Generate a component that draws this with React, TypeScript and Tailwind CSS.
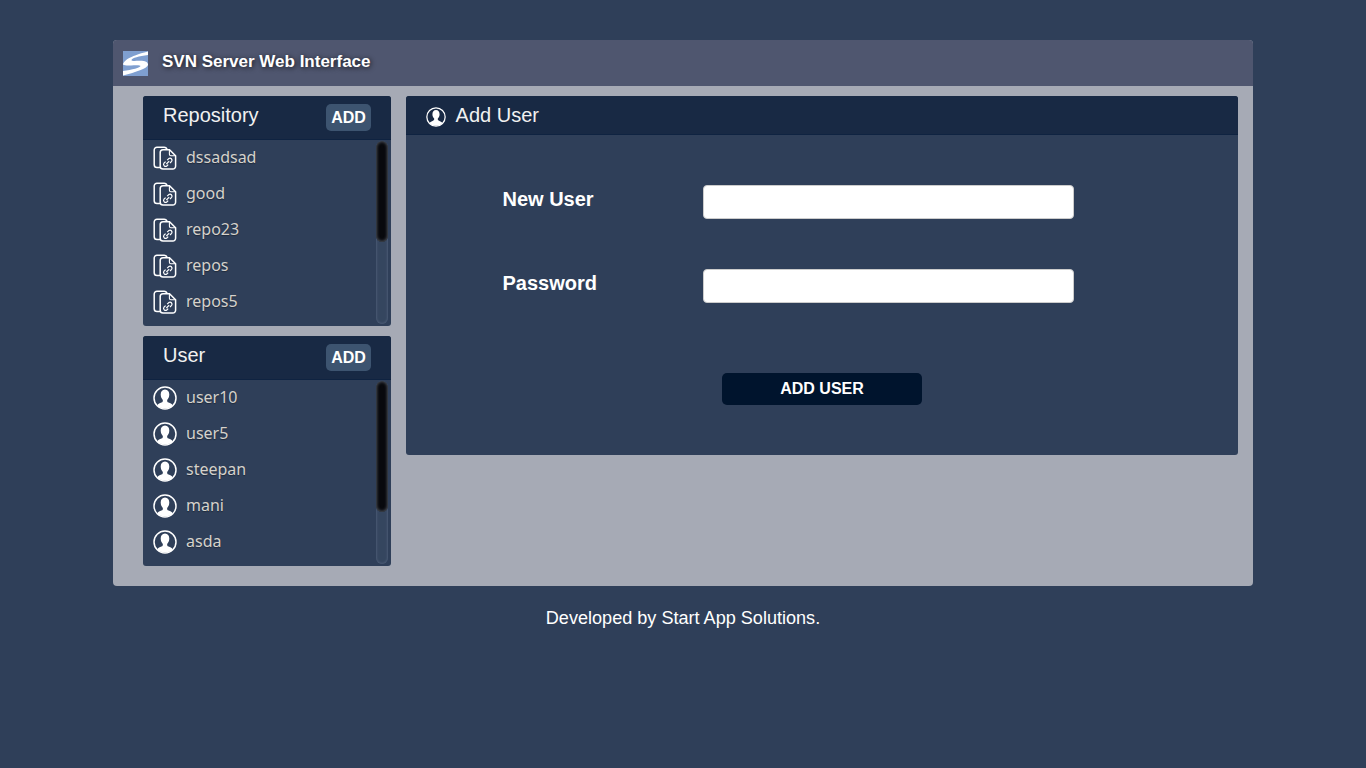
const sans = { fontFamily: '"Liberation Sans", Arial, sans-serif' };

function RepoIcon() {
  return (
    <svg width="24" height="24" viewBox="0 0 24 24" fill="none" stroke="#fff" strokeWidth="1.5" className="shrink-0">
      <path d="M7 21.5H4A2.8 2.8 0 0 1 1.2 18.7V4A2.8 2.8 0 0 1 4 1.2H11A3 3 0 0 1 14 3.5" />
      <path d="M10 3.8H16.5L22.6 9.8V20.2A2.8 2.8 0 0 1 19.8 23H10A2.8 2.8 0 0 1 7.2 20.2V6.6A2.8 2.8 0 0 1 10 3.8Z" fill="#2f3f5a" />
      <path d="M16.4 4V8.2A1.5 1.5 0 0 0 17.9 9.7H22.4" strokeWidth="1.1" />
      <path d="M14.2 14.2L15.8 12.6A2 2 0 0 1 18.6 15.4L17 17M15.2 18.6L13.8 20A2 2 0 0 1 11 17.2L12.6 15.6M13.4 18L16.2 15.2" strokeWidth="1.2" />
    </svg>
  );
}

function UserIcon({ size = 24 }: { size?: number }) {
  return (
    <svg width={size} height={size} viewBox="0 0 24 24" className="shrink-0">
      <circle cx="12" cy="12" r="11" fill="none" stroke="#fff" strokeWidth="1.5" />
      <path
        d="M12 3.6C9.2 3.6 7.7 5.8 7.7 8.6C7.7 11 8.7 12.8 9.8 13.9C10 15.2 9.8 16 8.4 16.6C6.8 17.3 5.2 17.8 4.2 19.4C6.2 21.4 9.1 22.4 12 22.4C14.9 22.4 17.8 21.4 19.8 19.4C18.8 17.8 17.2 17.3 15.6 16.6C14.2 16 14 15.2 14.2 13.9C15.3 12.8 16.3 11 16.3 8.6C16.3 5.8 14.8 3.6 12 3.6Z"
        fill="#fff"
      />
    </svg>
  );
}

function Logo() {
  return (
    <svg width="25" height="25" viewBox="0 0 25 25" className="shrink-0">
      <rect width="25" height="25" fill="#7f9fd0" />
      <path d="M0 13.5C1 10 5 5.5 25 0.5V4C16 5 9 7 8.5 9C8.3 10.3 12 10 16 9.8C22 9.6 25 11 25 13.5V14C24 17.5 13 21 0 24.5V20C9 19 17.5 16.5 17.5 15C17.5 14 13 14.2 8 14.4C4 14.6 1.5 14.4 0 13.5Z" fill="#fff" />
    </svg>
  );
}

function SidePanel({ title, items, icon, thumb }: { title: string; items: string[]; icon: React.ReactNode; thumb: "short" | "tall" }) {
  return (
    <section className="flex h-[230px] flex-col overflow-hidden rounded-[3px] bg-[#2f3f59]">
      <div className="flex h-[44px] shrink-0 items-start justify-between border-b border-[#0f2341] bg-[#182944] pl-5 pr-5">
        <h2 className="mt-[6px] text-[20px] leading-[27px] text-[#f1f1f1]">{title}</h2>
        <button className="mt-2 h-[27px] w-[45px] rounded-[5px] bg-[#3d5470] text-[16px] font-bold text-white">ADD</button>
      </div>
      <div className="flex min-h-0 flex-1">
        <ul className="flex-1 -translate-y-px">
          {items.map((item) => (
            <li key={item} className="flex h-[36px] items-center gap-[9px] pl-[10px]">
              <span className="translate-y-px">{icon}</span>
              <span className="text-[16px] leading-none text-[#d5d2cc]" style={{ fontFamily: '"Noto Sans", sans-serif', textShadow: "0 1px 1px rgba(0,0,0,.35)" }}>
                {item}
              </span>
            </li>
          ))}
        </ul>
        <div className="mr-[3px] mt-px h-[183px] w-3 overflow-hidden rounded-md bg-[#35465f] shadow-[inset_0_0_2px_1px_#4a5a74]">
          <div className={`rounded-md bg-[#08090d] shadow-[inset_0_0_3px_1px_rgba(90,95,105,.8)] ${thumb === "short" ? "h-[101px]" : "h-[131px]"}`} />
        </div>
      </div>
    </section>
  );
}

export default function App() {
  return (
    <div className="flex min-h-[768px] flex-col items-center bg-[#2f3f59] pt-10 text-white" style={sans}>
      <div className="w-[1140px] overflow-hidden rounded-[4px] bg-[#a6aab5]">
        <header className="flex h-[46px] items-center gap-[14px] bg-[#4f566f] pl-[10px]">
          <Logo />
          <h1 className="-translate-y-px text-[17px] font-bold" style={{ textShadow: "1px 1px 5px rgba(0,0,0,.75)" }}>
            SVN Server Web Interface
          </h1>
        </header>
        <div className="flex h-[500px] gap-[15px] pl-[30px] pr-[15px] pt-[10px]">
          <aside className="flex w-[248px] shrink-0 flex-col gap-[10px]">
            <SidePanel title="Repository" items={["dssadsad", "good", "repo23", "repos", "repos5"]} icon={<RepoIcon />} thumb="short" />
            <SidePanel title="User" items={["user10", "user5", "steepan", "mani", "asda"]} icon={<UserIcon />} thumb="tall" />
          </aside>
          <main className="h-[359px] flex-1 overflow-hidden rounded-[3px] bg-[#2f3f59]">
            <div className="flex h-[39px] items-center gap-[10px] border-b border-[#0f2341] bg-[#182944] pl-5">
              <span className="translate-y-[2px]">
                <UserIcon size={20} />
              </span>
              <h2 className="-ml-[0.4px] text-[20px] text-[#f1f1f1]">Add User</h2>
            </div>
            <form className="flex flex-col pt-[50px]">
              <div className="flex h-[34px] items-center pl-[96.5px]">
                <label className="w-[200.5px] pb-[6px] text-[20px] font-bold">New User</label>
                <input className="h-[34px] w-[371px] rounded-[4px] border border-[#ccc] bg-white" />
              </div>
              <div className="mt-[50px] flex h-[34px] items-center pl-[96.5px]">
                <label className="w-[200.5px] pb-[6px] text-[20px] font-bold">Password</label>
                <input type="password" className="h-[34px] w-[371px] rounded-[4px] border border-[#ccc] bg-white" />
              </div>
              <button type="button" className="ml-[316px] mt-[70px] h-8 w-[200px] rounded-[5px] bg-[#00142d] text-[16px] font-bold text-white">
                ADD USER
              </button>
            </form>
          </main>
        </div>
      </div>
      <p className="mt-[22px] text-[18.08px] leading-[21px]">Developed by Start App Solutions.</p>
    </div>
  );
}
